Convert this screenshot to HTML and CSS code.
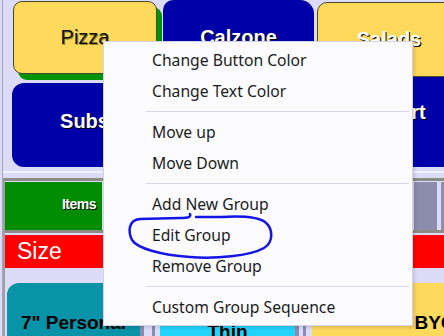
FILE: index.html
```html
<!DOCTYPE html>
<html>
<head>
    <meta charset="utf-8" />
    <title>Menu groups</title>
    <link rel="stylesheet" href="styles.css">
</head>
<body>
<div class="app">
    <div class="groups">
        <div class="col col1">
            <div class="grp grp_yellow pizza">Pizza</div>
            <div class="grp grp_blue subs">Subs</div>
        </div>
        <div class="col col2">
            <div class="grp grp_blue calzone">Calzone</div>
            <div class="grp grp_blue">Wings</div>
        </div>
        <div class="col col3">
            <div class="grp grp_yellow salads">Salads</div>
            <div class="grp grp_blue dessert">Dessert</div>
        </div>
    </div>
    <div class="panel">
        <div class="tabs">
            <div class="tab_items">Items</div>
            <div class="tab_space"></div>
            <div class="tab"></div>
            <div class="tab"></div>
        </div>
        <div class="size_bar">Size</div>
        <div class="items">
            <div class="item item_teal">7" Personal</div>
            <div class="item item_cyan">Thin</div>
            <div class="item item_yellow">BYO</div>
        </div>
    </div>
</div>

<div class="menu">
    <div class="menu_item">Change Button Color</div>
    <div class="menu_item">Change Text Color</div>
    <div class="menu_sep"></div>
    <div class="menu_item">Move up</div>
    <div class="menu_item">Move Down</div>
    <div class="menu_sep"></div>
    <div class="menu_item">Add New Group</div>
    <div class="menu_item">Edit Group</div>
    <div class="menu_item">Remove Group</div>
    <div class="menu_sep"></div>
    <div class="menu_item">Custom Group Sequence</div>
</div>

<svg class="mark" width="444" height="336" viewBox="0 0 444 336">
    <path d="M190,214 C191,217 189,218 180,218 L140,219 C128,220 128,232 132,240 C137,248 160,255 190,257 C215,259 250,256 264,248 C274,242 273,228 265,222 C258,217 240,216 222,217 L196,217" />
</svg>
</body>
</html>
```

FILE: styles.css
```css
*{margin:0;padding:0;box-sizing:border-box;}
body{
    position:relative;
    width:444px;
    height:336px;
    overflow:hidden;
    background:#dcdcf8;
    font-family:"Liberation Sans",Arial,sans-serif;
}
.app{
    height:336px;
    margin-left:2px;
    border-left:1px solid #a4a4b4;
}

/* group buttons */
.groups{
    display:flex;
    height:173px;
    padding-left:10px;
    border-bottom:2px solid #f0f0fe;
    overflow:hidden;
}
.col{flex-shrink:0;display:flex;flex-direction:column;}
.col1{width:144px;margin-right:6px;}
.col2{width:151px;margin-right:3px;}
.col3{width:144px;}
.grp{
    display:flex;
    align-items:center;
    justify-content:center;
    font-size:20px;
    font-weight:bold;
    color:#fff;
    text-shadow:1px 1px 0 #000;
}
.grp_yellow{background:#fed95c;border:1px solid #4a4a2a;}
.grp_blue{background:#0000a8;}
.pizza{
    height:73px;
    margin-top:1px;
    border-radius:9px;
    color:#111;
    font-weight:normal;
    text-shadow:1px 1px 0 #9a8420;
    box-shadow:5px 6px 0 #009400;
}
.subs{height:84px;margin-top:9px;margin-left:-1px;border-radius:12px;padding-bottom:7px;}
.calzone{height:76px;border-radius:10px 14px 0 0;}
.col2 .grp + .grp{height:90px;margin-top:7px;}
.salads{height:75px;margin-top:2px;border-radius:10px 0 0 0;}
.dessert{height:90px;padding-bottom:20px;}

/* item panel */
.panel{
    margin-top:5px;
    border-top:3px solid #8c8c84;
    border-left:2px solid #a0a0a4;
}
.tabs{
    display:flex;
    height:52px;
    padding-top:1px;
    margin-right:-20px;
    border-bottom:3px solid #8c8c84;
}
.tab_items{
    width:97px;
    background:#008c00;
    color:#fff;
    font-size:14px;
    font-weight:bold;
    letter-spacing:-0.5px;
    text-shadow:1px 1px 0 #000;
    display:flex;
    align-items:center;
    justify-content:flex-end;
    padding:0 6px 4px 0;
}
.tab_space{flex:1;}
.tab{width:23px;margin-left:4px;background:#8c8cac;}
.size_bar{
    height:33px;
    margin-top:2px;
    padding-left:12px;
    background:#ff0000;
    color:#fff;
    font-size:23px;
    line-height:33px;
}
.items{
    display:flex;
    height:60px;
    margin-top:15px;
    padding-left:2px;
}
.item{
    flex-shrink:0;
    text-align:center;
    font-size:19px;
    font-weight:bold;
    line-height:22px;
    color:#000;
    padding-top:29px;
}
.item_teal{
    width:133px;
    background:#0893a8;
    border-radius:12px 0 0 0;
    box-shadow:4px 0 0 #8c8cb0;
}
.item_cyan{
    width:135px;
    margin-left:20px;
    padding-top:38px;
    background:#22d4fb;
    box-shadow:4px 0 0 #8c8cb0, -5px 0 0 #dcdcf8, -8px 0 0 #8c8cb0;
}
.item_yellow{
    width:246px;
    margin-left:17px;
    background:#fdd95c;
    box-shadow:-6px 0 0 #dcdcf8, -9px 0 0 #8c8cb0;
}

/* context menu */
.menu{
    position:absolute;
    left:103px;
    top:41px;
    width:310px;
    height:285px;
    padding-top:3px;
    background:#fbfbfe;
    border:1px solid #d2d2e6;
    box-shadow:2px 2px 3px rgba(0,0,0,0.12);
    font-family:"Noto Sans","Open Sans",sans-serif;
}
.menu_item{
    height:31px;
    line-height:31px;
    padding-left:48px;
    font-size:15.7px;
    color:#1b1b1b;
}
.menu_sep{
    margin:4px 3px 5px 42px;
    border-top:1px solid #d6d6f0;
}
.mark{
    position:absolute;
    left:0;
    top:0;
    pointer-events:none;
}
.mark path{
    fill:none;
    stroke:#1414e6;
    stroke-width:2.5;
    stroke-linecap:round;
    stroke-linejoin:round;
}
```
